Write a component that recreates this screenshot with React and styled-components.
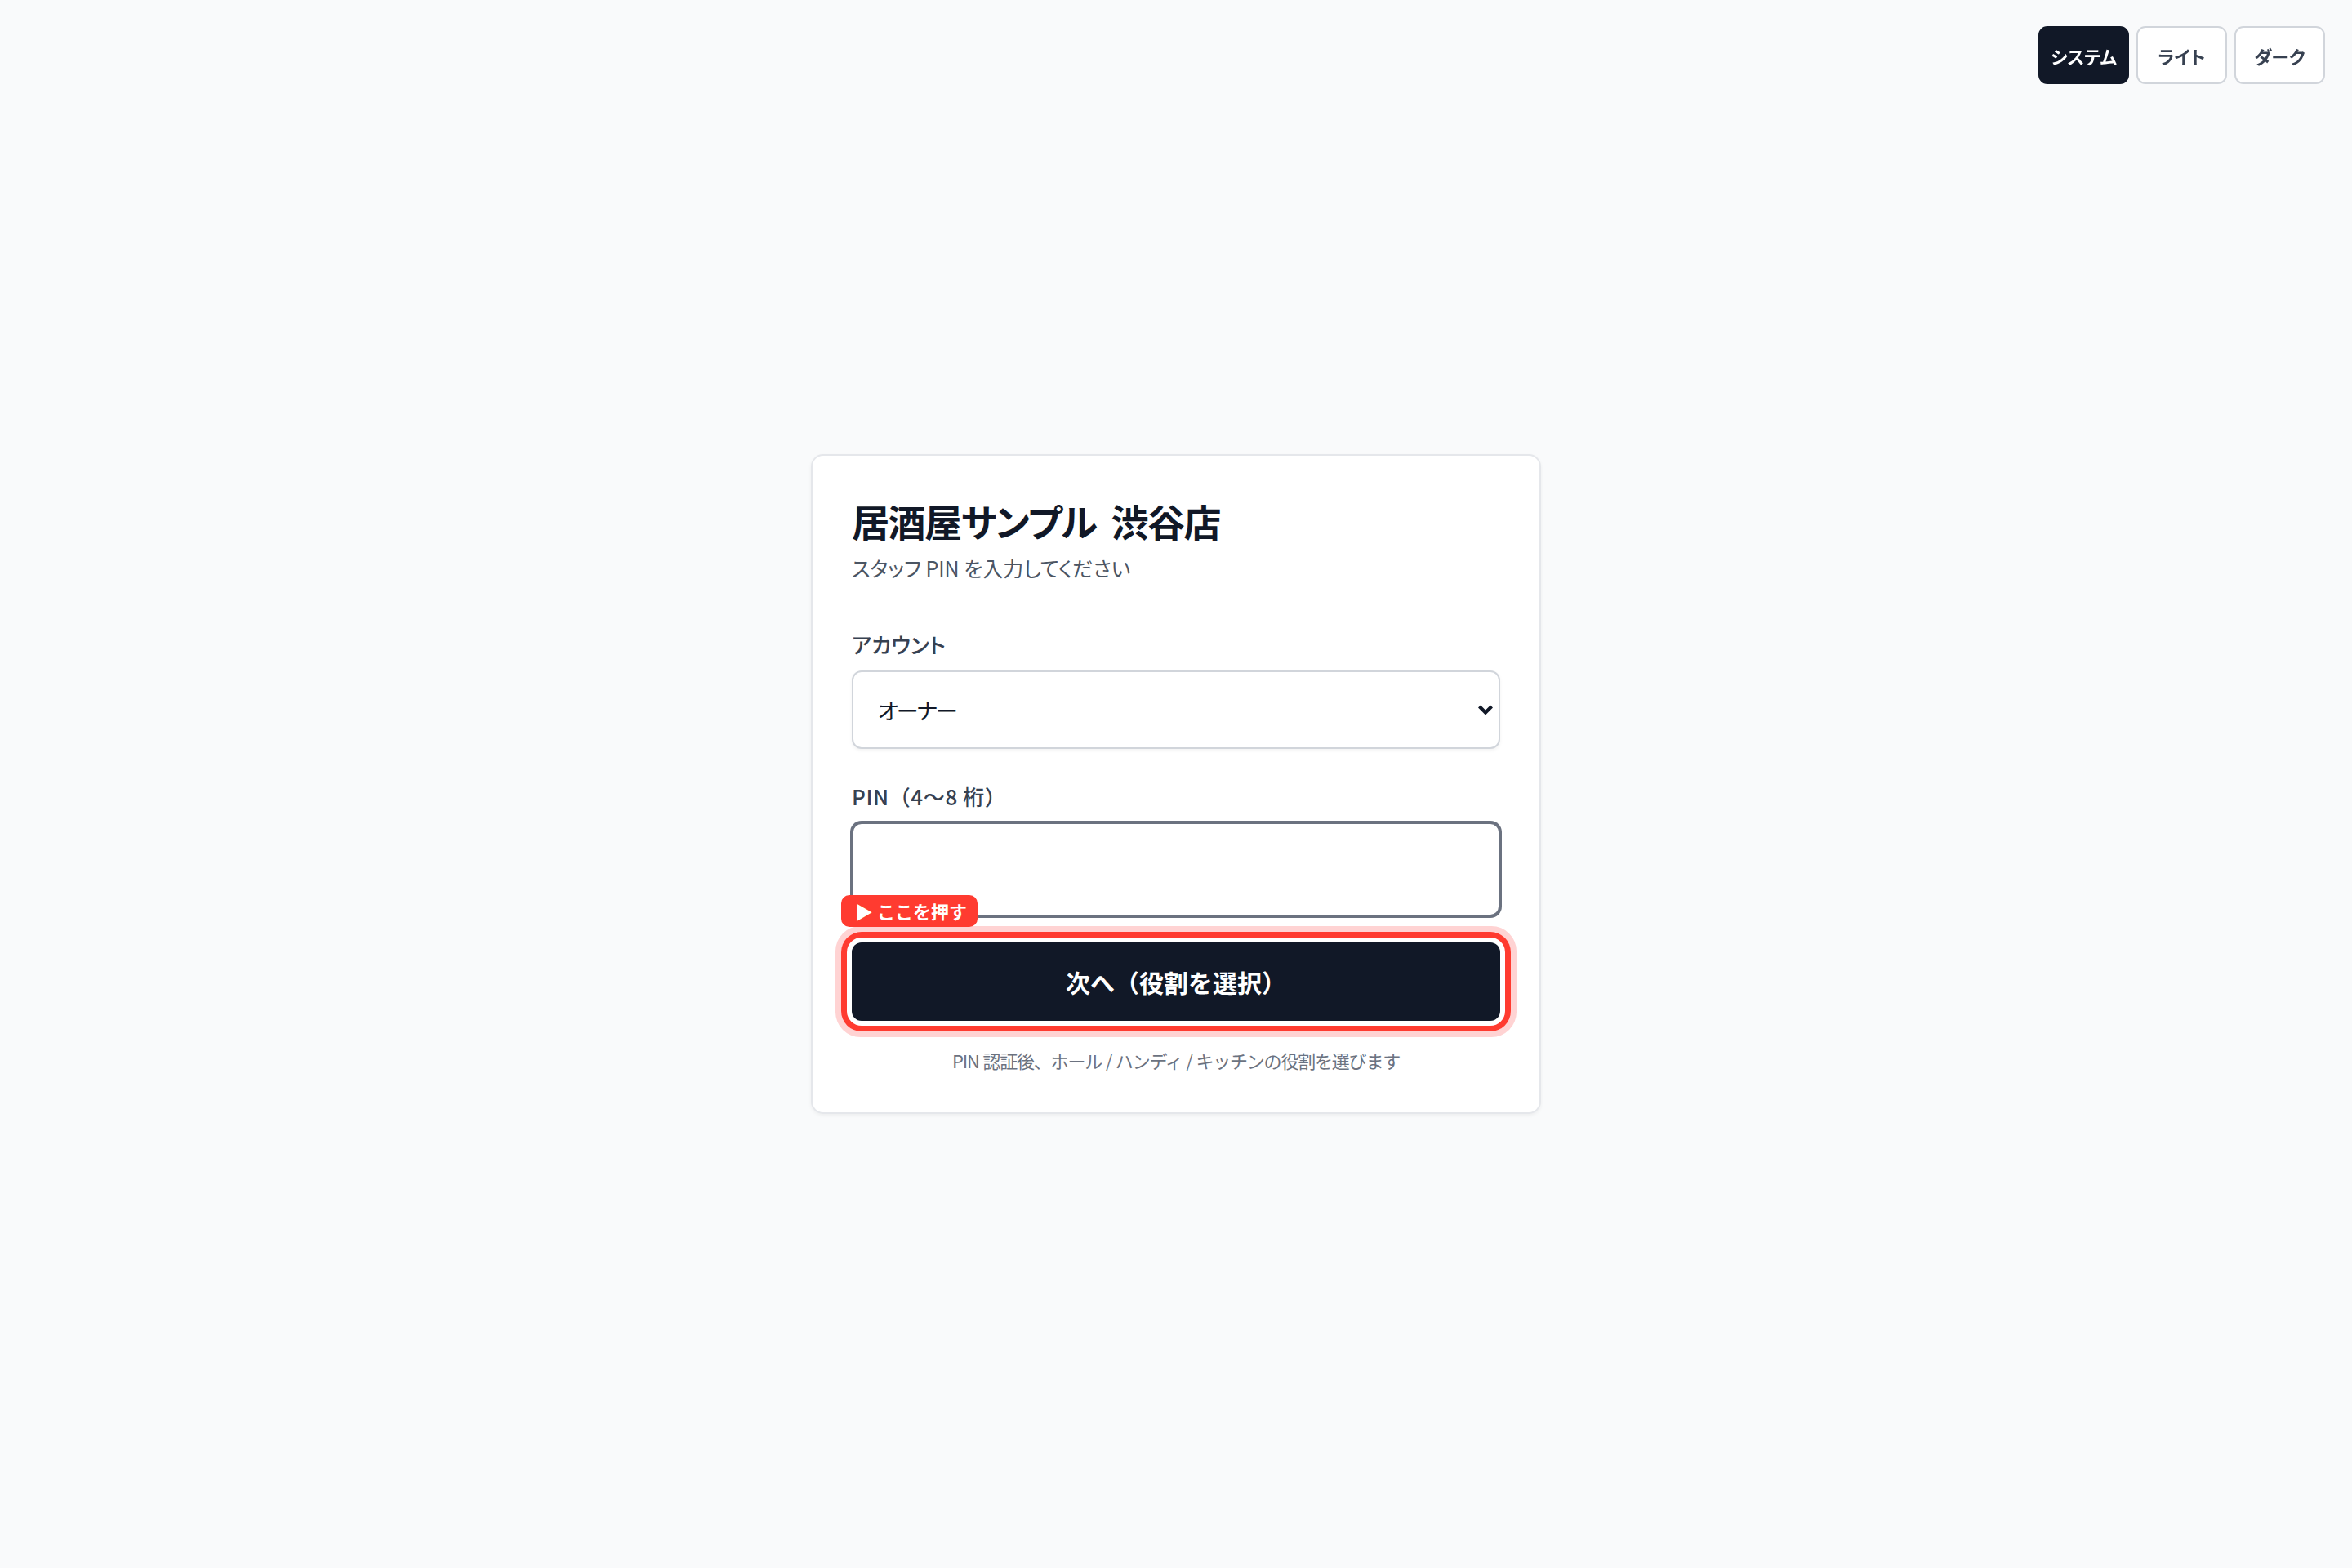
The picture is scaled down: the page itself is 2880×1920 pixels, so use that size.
import React from 'react';
import styled, { createGlobalStyle } from 'styled-components';

const GlobalStyle = createGlobalStyle`
  * {
    box-sizing: border-box;
  }
  html, body {
    margin: 0;
    padding: 0;
  }
  body {
    background: #f9fafb;
    color: #111827;
    font-family: "Noto Sans CJK JP", "Noto Sans", sans-serif;
  }
`;

const Page = styled.main`
  min-height: 100vh;
  display: flex;
  align-items: center;
  justify-content: center;
`;

/* floating theme switcher in the corner */
const ThemeSwitch = styled.div`
  position: fixed;
  top: 32px;
  right: 33px;
  display: flex;
  gap: 9px;
`;

const ThemeButton = styled.button`
  width: 111px;
  height: 71px;
  border-radius: 11px;
  border: 2px solid ${(p) => (p.$active ? '#111827' : '#d1d5db')};
  background: ${(p) => (p.$active ? '#111827' : '#ffffff')};
  color: ${(p) => (p.$active ? '#ffffff' : '#374151')};
  font-family: inherit;
  font-size: 22px;
  font-weight: 700;
  font-feature-settings: "palt";
  cursor: pointer;
`;

const Card = styled.section`
  width: 894px;
  padding: 48px;
  background: #ffffff;
  border: 2px solid #e5e7eb;
  border-radius: 15px;
  box-shadow: 0 2px 4px rgba(0, 0, 0, 0.05);
`;

const Title = styled.h1`
  margin: 0;
  font-size: 46px;
  line-height: 62px;
  font-weight: 700;
  letter-spacing: -1.5px;
  word-spacing: 9px;
  color: #111827;
  font-feature-settings: "palt";
`;

const Subtitle = styled.p`
  margin: 9px 0 0;
  font-size: 25px;
  line-height: 36px;
  color: #4b5563;
  font-feature-settings: "palt";
`;

const Form = styled.form`
  margin-top: 58px;
  display: flex;
  flex-direction: column;
  gap: 40px;
`;

const Field = styled.div`
  display: flex;
  flex-direction: column;
  gap: 14px;
`;

const Label = styled.label`
  font-size: 26px;
  line-height: 36px;
  font-weight: 500;
  color: #374151;
  letter-spacing: ${(p) => (p.$palt ? '0' : '0.6px')};
  font-feature-settings: ${(p) => (p.$palt ? '"palt"' : 'normal')};
`;

const SelectWrap = styled.div`
  position: relative;
`;

const Select = styled.select`
  width: 100%;
  height: 96px;
  padding: 0 60px 0 30px;
  appearance: none;
  background: #ffffff;
  border: 2px solid #d1d5db;
  border-radius: 12px;
  box-shadow: 0 2px 4px rgba(0, 0, 0, 0.05);
  color: #111827;
  font-family: inherit;
  font-size: 27px;
  letter-spacing: -2px;
  font-feature-settings: "palt";
`;

const Chevron = styled.svg`
  position: absolute;
  right: 8px;
  top: 50%;
  width: 20px;
  height: 13px;
  transform: translateY(-50%);
  pointer-events: none;
`;

const PinInput = styled.input`
  width: 100%;
  height: 115px;
  padding: 0 30px;
  background: #ffffff;
  border: 2px solid #6b7280;
  border-radius: 12px;
  box-shadow: 0 0 0 2px #6b7280;
  outline: none;
  font-family: inherit;
  font-size: 28px;
  color: #111827;
`;

const Action = styled.div`
  position: relative;
  margin-top: -8px;
`;

const SubmitButton = styled.button`
  width: 100%;
  height: 96px;
  border: none;
  border-radius: 12px;
  background: #111827;
  color: #ffffff;
  font-family: inherit;
  font-size: 30px;
  font-weight: 700;
  cursor: pointer;
  box-shadow: 0 0 0 6px #ffffff, 0 0 0 13px #ff3b30, 0 0 0 20px #ffd3d3;
`;

const Hint = styled.span`
  position: absolute;
  left: -13px;
  top: -58px;
  z-index: 1;
  height: 39px;
  padding: 0 13px 0 17px;
  border-radius: 10px;
  background: #ff3b30;
  color: #ffffff;
  font-size: 22px;
  line-height: 39px;
  font-weight: 700;
  white-space: nowrap;
`;

const Note = styled.p`
  margin: 32px 0 0;
  text-align: center;
  font-size: 22px;
  line-height: 32px;
  letter-spacing: -1.2px;
  word-spacing: 1px;
  color: #6b7280;
`;

export default function App() {
  return (
    <>
      <GlobalStyle />
      <ThemeSwitch>
        <ThemeButton $active>システム</ThemeButton>
        <ThemeButton>ライト</ThemeButton>
        <ThemeButton>ダーク</ThemeButton>
      </ThemeSwitch>
      <Page>
        <Card>
          <Title>居酒屋サンプル 渋谷店</Title>
          <Subtitle>スタッフ PIN を入力してください</Subtitle>
          <Form onSubmit={(e) => e.preventDefault()}>
            <Field>
              <Label $palt htmlFor="account">アカウント</Label>
              <SelectWrap>
                <Select id="account" defaultValue="owner">
                  <option value="owner">オーナー</option>
                  <option value="manager">店長</option>
                  <option value="staff">スタッフ</option>
                </Select>
                <Chevron viewBox="0 0 20 13" fill="none">
                  <path d="M2.5 2.5 L10 10 L17.5 2.5" stroke="#111827" strokeWidth="4.2" />
                </Chevron>
              </SelectWrap>
            </Field>
            <Field>
              <Label htmlFor="pin">PIN（4〜8 桁）</Label>
              <PinInput id="pin" type="password" inputMode="numeric" />
            </Field>
            <Action>
              <Hint>▶ ここを押す</Hint>
              <SubmitButton type="submit">次へ（役割を選択）</SubmitButton>
            </Action>
          </Form>
          <Note>PIN 認証後、ホール / ハンディ / キッチンの役割を選びます</Note>
        </Card>
      </Page>
    </>
  );
}
